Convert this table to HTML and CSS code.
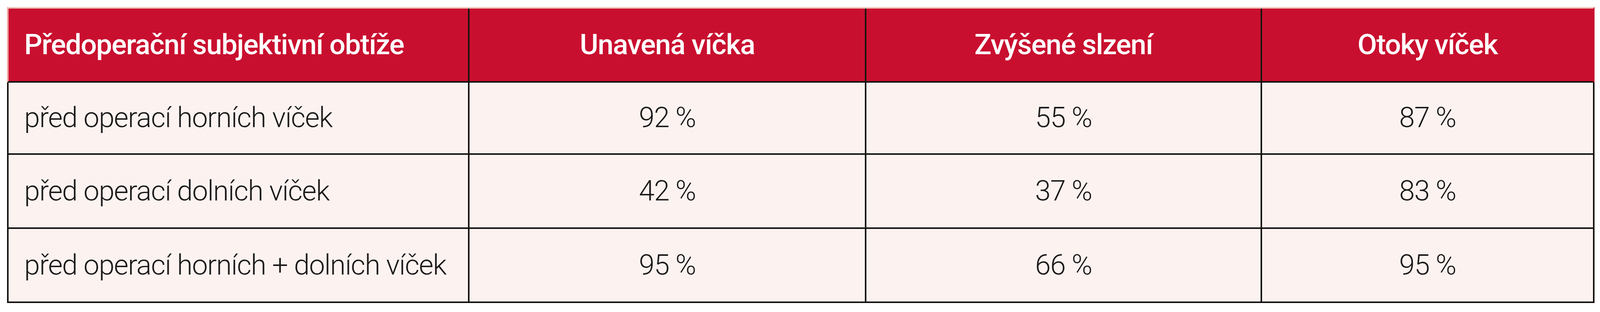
FILE: index.html
```html
<!DOCTYPE html>
<html lang="cs">
<head>
<meta charset="utf-8">
<title>Předoperační subjektivní obtíže</title>
<link rel="stylesheet" href="styles.css">
</head>
<body>
<div class="table">
  <div class="head">
    <div class="cell first">Předoperační subjektivní obtíže</div>
    <div class="cell">Unavená víčka</div>
    <div class="cell">Zvýšené slzení</div>
    <div class="cell">Otoky víček</div>
  </div>
  <div class="row r1">
    <div class="cell first">před operací horních víček</div>
    <div class="cell">92 %</div>
    <div class="cell">55 %</div>
    <div class="cell">87 %</div>
  </div>
  <div class="row">
    <div class="cell first">před operací dolních víček</div>
    <div class="cell">42 %</div>
    <div class="cell">37 %</div>
    <div class="cell">83 %</div>
  </div>
  <div class="row">
    <div class="cell first">před operací horních + dolních víček</div>
    <div class="cell">95 %</div>
    <div class="cell">66 %</div>
    <div class="cell">95 %</div>
  </div>
</div>
</body>
</html>
```

FILE: styles.css
```css
html, body {
  margin: 0;
  padding: 0;
  background: #ffffff;
}

/* Sized for a 5944px-wide window: 105px text, 58px inset. */
.table {
  margin: 18px 14px 0 18px;
  font-family: Roboto, "Liberation Sans", sans-serif;
  font-size: 1.7665vw;
  letter-spacing: -0.02em;
  line-height: 1.2;
}

.head,
.row {
  display: grid;
  grid-template-columns: 1714fr 1474fr 1470fr 1234fr;
  column-gap: 4px;
  background: #161412;
}

.head {
  border-top: 4px solid #f0c6bd;
  border-left: 4px solid #eda5a0;
  border-right: 4px solid #c90f2f;
  border-bottom: 4px solid #161412;
}

.head .cell {
  height: 186px;
  background: #c90f2f;
  color: #ffffff;
  font-weight: 500;
}

.row {
  border-left: 4px solid #161412;
  border-right: 4px solid #161412;
  border-bottom: 4px solid #161412;
}

.row .cell {
  height: 186px;
  background: #fcf3f1;
  color: #1c1a1a;
  font-weight: 300;
}

.row.r1 .cell {
  height: 181px;
}

.cell {
  display: flex;
  align-items: center;
  justify-content: center;
  white-space: nowrap;
  min-width: 0;
}

.cell.first {
  justify-content: flex-start;
  padding-left: 0.976vw;
}
```
